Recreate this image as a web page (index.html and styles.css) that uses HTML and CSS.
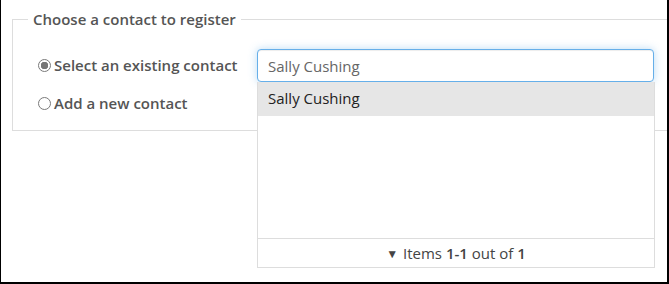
FILE: index.html
```html
<!DOCTYPE html>
<html>
  <head>
    <meta charset="utf-8">
    <link rel="stylesheet" href="styles.css">
  </head>
  <body>
    <div class="frame">
      <fieldset class="contact-set">
        <legend>Choose a contact to register</legend>
        <div class="choices">
          <label class="choice"><input type="radio" name="contact" checked> Select an existing contact</label>
          <label class="choice"><input type="radio" name="contact"> Add a new contact</label>
        </div>
      </fieldset>

      <div class="combo">
        <input type="text" class="combo-input" value="Sally Cushing">
        <div class="popup">
          <ul class="items">
            <li class="item selected">Sally Cushing</li>
          </ul>
          <div class="pager"><span class="arrow">&#9660;</span> Items <b>1-1</b> out of <b>1</b></div>
        </div>
      </div>
    </div>
  </body>
</html>
```
FILE: styles.css
```css
html, body {
  margin: 0;
  padding: 0;
  background: #fff;
}

body {
  font-family: "Open Sans", sans-serif;
  color: #555;
}

.frame {
  position: relative;
  box-sizing: border-box;
  width: 669px;
  height: 284px;
  border-left: 1px solid #000;
  border-right: 2px solid #000;
  border-bottom: 2px solid #000;
  overflow: hidden;
}

.contact-set {
  margin: 9px 0 0 11px;
  width: 700px;
  height: 122px;
  box-sizing: border-box;
  border: 1px solid #ddd;
  padding: 0 0 0 15px;
}

.contact-set legend {
  font-size: 15px;
  font-weight: 600;
  padding: 0 5px;
  margin: 0;
  color: #555;
}

.choices {
  display: flex;
  flex-direction: column;
  gap: 14px;
  padding: 24px 0 0 9px;
}

.choice {
  display: flex;
  align-items: center;
  font-size: 15px;
  font-weight: 600;
  height: 24px;
}

.choice input {
  appearance: none;
  -webkit-appearance: none;
  box-sizing: border-box;
  margin: 0 3px 0 1px;
  width: 13px;
  height: 13px;
  border: 1px solid #7a7a7a;
  border-radius: 50%;
  background: #fff;
}

.choice input:checked {
  background: radial-gradient(circle, #777 0, #777 3.5px, #fff 4px);
}

/* dropdown lies over the fieldset */
.combo {
  position: absolute;
  left: 256px;
  top: 49px;
  width: 398px;
}

.combo-input {
  display: block;
  box-sizing: border-box;
  width: 397px;
  height: 33px;
  padding: 0 10px;
  font-family: "Open Sans", sans-serif;
  font-size: 15px;
  color: #666;
  border: 1px solid #66afe9;
  border-radius: 4px;
  outline: none;
  box-shadow: inset 0 1px 1px rgba(0,0,0,.075), 0 0 8px rgba(102,175,233,.45);
}

.popup {
  box-sizing: border-box;
  width: 398px;
  height: 186px;
  border: 1px solid #ddd;
  border-top: none;
  background: #fff;
  display: flex;
  flex-direction: column;
}

.items {
  list-style: none;
  margin: 0;
  padding: 0;
  flex: 1;
}

.item {
  height: 34px;
  line-height: 33px;
  padding: 0 10px;
  font-size: 15px;
  color: #222;
}

.item.selected {
  background: #e6e6e6;
}

.pager {
  height: 28px;
  line-height: 28px;
  border-top: 1px solid #ddd;
  text-align: center;
  font-size: 15px;
  color: #444;
}

.pager b {
  font-weight: 600;
}

.pager .arrow {
  font-size: 12px;
  vertical-align: 1px;
  margin-right: 1px;
}
```
